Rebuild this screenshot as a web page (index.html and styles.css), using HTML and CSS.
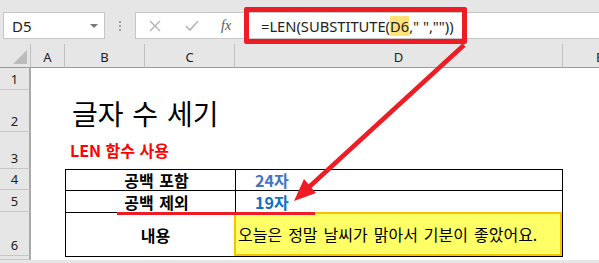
FILE: index.html
```html
<!DOCTYPE html>
<html lang="ko">

<head>
    <meta charset="UTF-8">
    <meta name="viewport" content="width=device-width, initial-scale=1.0">
    <title>글자 수 세기</title>
    <link rel="stylesheet" href="styles.css">
</head>

<body>
    <div class="toolbar">
        <div class="namebox">
            <span>D5</span>
            <span class="caret"></span>
        </div>
        <div class="grip"><i></i><i></i><i></i></div>
        <div class="fbox">
            <div class="fbtns">
                <svg width="12" height="12" viewBox="0 0 12 12"><path d="M1 1L11 11M11 1L1 11" stroke="#b4b4b4" stroke-width="1.4" fill="none"/></svg>
                <svg width="14" height="12" viewBox="0 0 14 12"><path d="M1 6L5 10L13 1" stroke="#b4b4b4" stroke-width="1.6" fill="none"/></svg>
                <span class="fx">fx</span>
            </div>
            <div class="finput">=LEN(SUBSTITUTE(<span class="ref">D6</span>," ",""))</div>
        </div>
    </div>

    <div class="sheet">
        <!-- column headers -->
        <div class="corner"><span class="tri"></span></div>
        <div class="colhead">A</div>
        <div class="colhead">B</div>
        <div class="colhead">C</div>
        <div class="colhead">D</div>
        <div class="colhead last">E</div>

        <!-- row headers -->
        <div class="rowhead" style="grid-row: 2">1</div>
        <div class="rowhead" style="grid-row: 3">2</div>
        <div class="rowhead" style="grid-row: 4">3</div>
        <div class="rowhead" style="grid-row: 5">4</div>
        <div class="rowhead" style="grid-row: 6">5</div>
        <div class="rowhead" style="grid-row: 7">6</div>
        <div class="rowhead" style="grid-row: 8"></div>

        <div class="title">글자 수 세기</div>
        <div class="subtitle">LEN 함수 사용</div>

        <div class="tbl">
            <div class="lbl">공백 포함</div>
            <div class="val v1">24자</div>
            <div class="lbl">공백 제외</div>
            <div class="val v2">19자</div>
            <div class="lbl tall">내용</div>
            <div class="val text">오늘은 정말 날씨가 맑아서 기분이 좋았어요.</div>
        </div>
    </div>

    <!-- annotations -->
    <div class="callout"></div>
    <div class="underline"></div>
    <svg class="arrow" width="599" height="263" viewBox="0 0 599 263">
        <line x1="464" y1="45" x2="308" y2="188" stroke="#ee1c25" stroke-width="4.5"/>
        <polygon points="294,201 316,193 304,179" fill="#ee1c25"/>
    </svg>
</body>

</html>
```

FILE: styles.css
```css
body {
    margin: 0;
    width: 599px;
    height: 263px;
    overflow: hidden;
    background-color: #e6e6e6;
    font-family: "Noto Sans", "Noto Sans CJK KR", sans-serif;
    position: relative;
}

.toolbar {
    display: flex;
    align-items: flex-start;
    height: 47px;
    padding: 12px 0 0 3px;
    box-sizing: border-box;
    border-top: 3px solid #f0f0f0;
    margin-top: -3px;
}

.namebox {
    display: flex;
    align-items: center;
    justify-content: space-between;
    width: 102px;
    height: 27px;
    box-sizing: border-box;
    background-color: #fff;
    border: 1px solid #c6c6c6;
    padding: 0 6px 0 8px;
    font-size: 15px;
    color: #222;
}

.caret {
    width: 0;
    height: 0;
    border-left: 4px solid transparent;
    border-right: 4px solid transparent;
    border-top: 4px solid #777;
}

.grip {
    width: 30px;
    height: 27px;
    display: flex;
    flex-direction: column;
    align-items: center;
    justify-content: center;
    gap: 2px;
}

.grip i {
    display: block;
    width: 2px;
    height: 2px;
    background-color: #a0a0a0;
}

.fbox {
    flex: 1;
    display: flex;
    align-items: center;
    height: 27px;
    box-sizing: border-box;
    background-color: #fff;
    border: 1px solid #c6c6c6;
    border-right: none;
}

.fbtns {
    display: flex;
    align-items: center;
    width: 106px;
    padding-left: 13px;
    box-sizing: border-box;
    gap: 24px;
}

.fx {
    font-family: "Liberation Serif", serif;
    font-style: italic;
    font-size: 14px;
    color: #555;
    margin-left: -2px;
}

.finput {
    padding-left: 19px;
    font-size: 14.7px;
    color: #222;
    white-space: pre;
}

.ref {
    background-color: #ffe27a;
}

.sheet {
    display: grid;
    grid-template-columns: 31px 34px 80px 90px 328px 1fr;
    grid-template-rows: 24px 22px 42px 37px 21px 22px 44px 1fr;
    height: 216px;
    background-color: #fff;
}

.corner {
    grid-row: 1;
    grid-column: 1;
    background-color: #e6e6e6;
    border-right: 1px solid #c0c0c0;
    border-bottom: 1px solid #9b9b9b;
    position: relative;
}

.tri {
    position: absolute;
    right: 3px;
    bottom: 3px;
    width: 0;
    height: 0;
    border-left: 14px solid transparent;
    border-bottom: 14px solid #bcbcbc;
}

.colhead {
    grid-row: 1;
    display: flex;
    align-items: center;
    justify-content: center;
    padding-top: 2px;
    background-color: #e6e6e6;
    border-right: 1px solid #c0c0c0;
    border-bottom: 1px solid #9b9b9b;
    font-size: 13px;
    color: #222;
}

.colhead.last {
    border-right: none;
    justify-content: flex-start;
    padding-left: 33px;
}

.rowhead {
    grid-column: 1;
    display: flex;
    align-items: flex-end;
    justify-content: center;
    padding-bottom: 1px;
    background-color: #e6e6e6;
    border-right: 2px solid #a8a8a8;
    border-bottom: 1px solid #c6c6c6;
    font-size: 13px;
    line-height: 18px;
    color: #222;
}

.title {
    grid-row: 3;
    grid-column: 3 / 6;
    align-self: end;
    padding: 0 0 4px 7px;
    font-family: "Noto Sans CJK KR", sans-serif;
    font-size: 28px;
    line-height: 30px;
    word-spacing: 1px;
    color: #000;
}

.subtitle {
    grid-row: 4;
    grid-column: 3 / 6;
    align-self: end;
    padding: 0 0 9px 5px;
    font-family: "Noto Sans CJK KR", sans-serif;
    font-weight: bold;
    font-size: 16px;
    line-height: 20px;
    color: #ff0000;
}

.tbl {
    grid-row: 5 / 8;
    grid-column: 3 / 6;
    display: grid;
    grid-template-columns: 170px 1fr;
    grid-template-rows: 21px 22px 1fr;
    border: 1px solid #000;
    margin-bottom: -1px;
    font-family: "Noto Sans CJK KR", sans-serif;
    font-size: 16px;
}

.lbl {
    display: flex;
    align-items: center;
    justify-content: center;
    font-weight: bold;
    color: #000;
    border-right: 1px solid #000;
    border-bottom: 1px solid #000;
    padding-left: 12px;
    word-spacing: 1px;
}

.lbl.tall {
    border-bottom: none;
    padding-left: 10px;
}

.val {
    display: flex;
    align-items: center;
    padding-left: 19px;
    font-weight: bold;
    border-bottom: 1px solid #000;
}

.v1 {
    color: #4472c4;
}

.v2 {
    color: #0f70c4;
}

.val.text {
    font-weight: normal;
    color: #000;
    border-bottom: none;
    background-color: #ffff66;
    box-shadow: inset 0 0 0 2px #f5c400;
    margin-left: -2px;
    margin-top: -1px;
    padding-left: 4px;
    word-spacing: 1.5px;
}

.callout {
    position: absolute;
    left: 244px;
    top: 7px;
    width: 223px;
    height: 37px;
    box-sizing: border-box;
    border: 5px solid #ee1c25;
    border-radius: 2px;
}

.underline {
    position: absolute;
    left: 117px;
    top: 212px;
    width: 198px;
    height: 3px;
    background-color: #ee1c25;
}

.arrow {
    position: absolute;
    left: 0;
    top: 0;
}
```
